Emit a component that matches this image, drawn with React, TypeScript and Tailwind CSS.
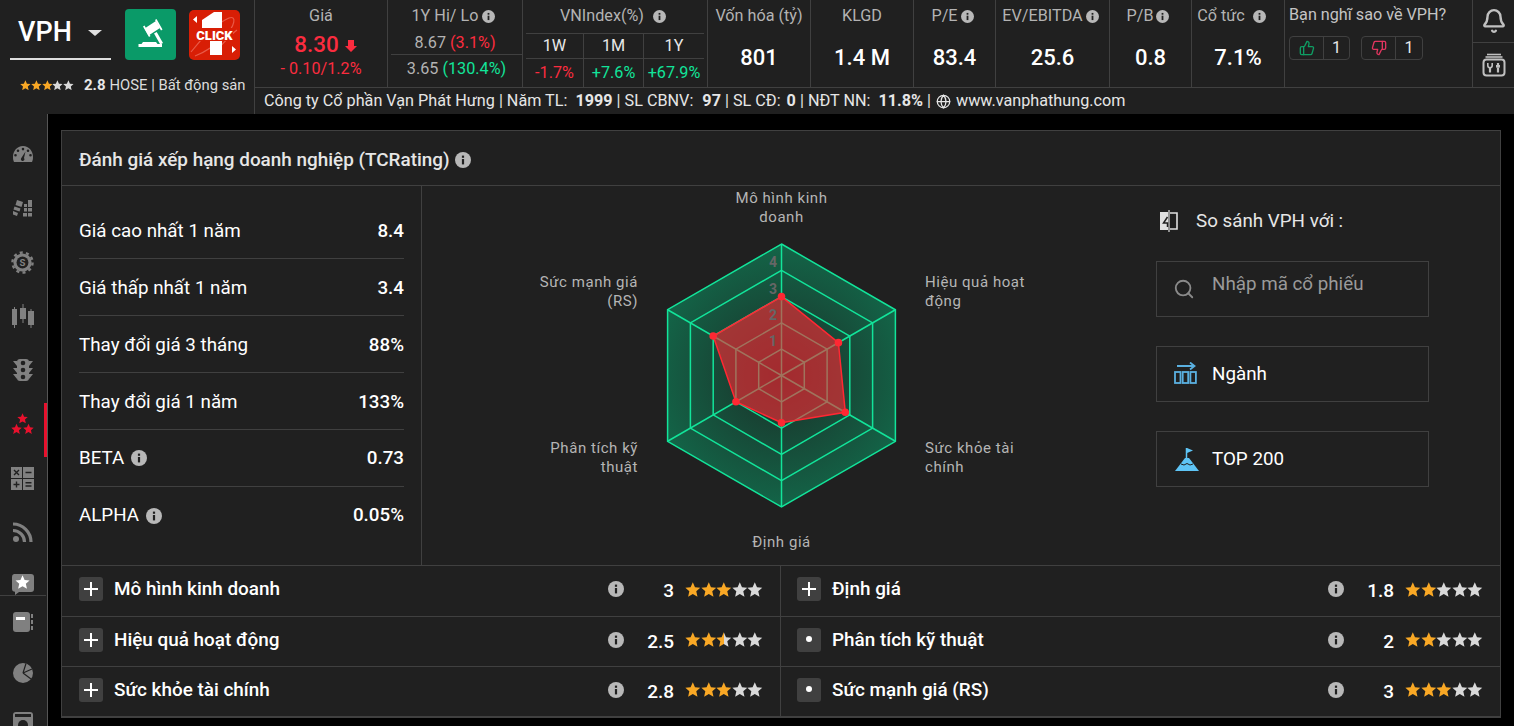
import React from "react";
import { Bell, Globe, Search, ThumbsDown, ThumbsUp } from "lucide-react";

const STAR = "M12 1.5l3.1 7 7.4.7-5.6 5 1.7 7.5L12 17.8l-6.6 3.9 1.7-7.5-5.6-5 7.4-.7z";

function Stars({ value, size }: { value: number; size: number }) {
  const id = React.useId();
  return (
    <span className="inline-flex items-center">
      {[0, 1, 2, 3, 4].map((i) => {
        const fill = Math.min(1, Math.max(0, value - i));
        return (
          <svg key={i} viewBox="1 1 22 22" width={size} height={size} className="block">
            <defs>
              <linearGradient id={id + i}>
                <stop offset={fill} stopColor="#f9a825" />
                <stop offset={fill} stopColor="#d9d9d9" />
              </linearGradient>
            </defs>
            <path d={STAR} fill={`url(#${id + i})`} />
          </svg>
        );
      })}
    </span>
  );
}

function Info({ size = 14, className = "" }: { size?: number; className?: string }) {
  return (
    <svg viewBox="0 0 16 16" width={size} height={size} className={"inline-block shrink-0 " + className}>
      <circle cx="8" cy="8" r="8" fill="#b8b8b8" />
      <rect x="6.9" y="7" width="2.2" height="5.4" fill="#202020" />
      <rect x="6.9" y="3.6" width="2.2" height="2.2" fill="#202020" />
    </svg>
  );
}

function Metric({ w, label, value, info, cls = "" }: { w: string; label: string; value: string; info?: boolean; cls?: string }) {
  return (
    <div className={w + " shrink-0 h-full border-r border-[#404040] flex flex-col items-center"}>
      <div className={"h-[32px] flex items-center text-[16.2px] text-[#b3b3b3] whitespace-nowrap " + cls}>
        {label}
        {info && <Info size={13} className="ml-[3px]" />}
      </div>
      <div className="mt-[12px] h-[28px] flex items-center text-[22px] font-medium text-white leading-none">{value}</div>
    </div>
  );
}

function Logos() {
  return (
    <>
      <div className="w-[51px] h-[51px] rounded-[4px] bg-[#0a9a68] flex items-center justify-center">
        <svg viewBox="0 0 51 51" width="51" height="51">
          <g fill="#fff">
            <path d="M19.500 19.500L31 12l4 7-11.500 7.500z" />
            <path d="M18 17.500l1.500-1 6 10.500-1.500 1zM30 11l1.500-1 6 10.500-1.500 1z" />
            <path d="M29 24.500l2.700-1.600 6.300 11-2.700 1.600z" />
            <path d="M18 33h13l1.500 2H37v3H13.500v-3h3z" />
          </g>
        </svg>
      </div>
      <div className="ml-[13px] mt-[1px] w-[51px] h-[50px] rounded-[5px] bg-[#d81e05] overflow-hidden">
        <svg viewBox="0 0 51 50" width="51" height="50">
          <path d="M2 42C14 26 30 12 40 8c8-3 6 8-4 18-8 8-20 16-30 20" fill="none" stroke="#e85a48" strokeWidth="1.2" />
          <path d="M24 44c8-8 18-20 24-24" fill="none" stroke="#e85a48" strokeWidth="1.2" />
          <path d="M13 10L25 2h8v17H13z" fill="#fff" />
          <rect x="21" y="31" width="12" height="14" fill="#fff" />
          <path d="M8 6L4 9.500 8 13zM43 36l4 3.500-4 3.500z" fill="#fff" />
          <rect x="7" y="18" width="37" height="13" fill="#d81e05" />
          <text x="25.500" y="30" textAnchor="middle" fontSize="13" fontWeight="900" fill="#fff" fontFamily="Roboto, sans-serif">CLICK</text>
        </svg>
      </div>
    </>
  );
}

function Header() {
  return (
    <div className="h-[114px] flex bg-[#202020] shrink-0">
      <div className="w-[255px] shrink-0 border-r border-[#404040] flex flex-col">
        <div className="flex pt-[9px] h-[72px]">
          <div className="ml-[10px] w-[101px] h-[51px] border-b-2 border-[#dddddd] flex items-center pl-[8px]">
            <span className="text-[27px] font-medium text-white leading-none mt-[-3px]">VPH</span>
            <span className="ml-[16px] mt-[-2px] w-0 h-0 border-x-[7px] border-x-transparent border-t-[6px] border-t-[#e0e0e0]" />
          </div>
          <div className="ml-[14px] flex items-start">
            <Logos />
          </div>
        </div>
        <div className="flex items-center h-[26px] pl-[20px]">
          <Stars value={3} size={10.8} />
          <span className="ml-[10px] text-[15px] font-bold text-[#e8e8e8]">2.8</span>
          <span className="ml-[4px] text-[14.8px] text-[#dcdcdc] whitespace-nowrap">HOSE | Bất động sản</span>
        </div>
      </div>
      <div className="flex-1 flex flex-col min-w-0">
        <div className="h-[88px] flex border-b border-[#404040]">
          <div className="w-[133px] shrink-0 border-r border-[#404040] flex flex-col items-center">
            <div className="h-[32px] flex items-center text-[16.2px] text-[#b3b3b3]">Giá</div>
            <div className="h-[25px] flex items-center ml-[9px] text-[22.5px] font-medium text-[#fb2c3f] leading-none">
              8.30
              <svg viewBox="0 0 12 12" width="12" height="12" className="ml-[6px] mt-[2px]"><path d="M3 0h6v6h3L6 12 0 6h3z" fill="#fb2c3f" /></svg>
            </div>
            <div className="h-[24px] flex items-center text-[16.2px] text-[#fb2c3f]">- 0.10/1.2%</div>
          </div>
          <div className="w-[135px] shrink-0 border-r border-[#404040] flex flex-col">
            <div className="h-[32px] flex items-center justify-center pr-[3px] text-[16.2px] text-[#b3b3b3]">1Y Hi/ Lo<Info size={13} className="ml-1" /></div>
            <div className="h-[22px] flex items-center justify-center text-[16.2px] text-[#b3b3b3]">8.67&nbsp;<span className="text-[#fb2c3f]">(3.1%)</span></div>
            <div className="ml-[3px] h-[30px] border-t border-[#404040] flex items-center justify-center text-[16.2px] text-[#b3b3b3]">3.65&nbsp;<span className="text-[#12e49a]">(130.4%)</span></div>
          </div>
          <div className="w-[185px] shrink-0 border-r border-[#404040] flex flex-col">
            <div className="h-[33px] flex items-center justify-center pr-[4px] text-[16.2px] text-[#b3b3b3]">VNIndex(%)<Info size={13} className="ml-[9px]" /></div>
            <div className="ml-[3px] mr-[3px] border-t border-[#404040] grid grid-cols-[58px_60px_60px] flex-1 grid-rows-[25px_1fr]">
              <div className="border-r border-b border-[#404040] flex items-center justify-center text-[16.2px] text-[#e8e8e8]">1W</div>
              <div className="border-r border-b border-[#404040] flex items-center justify-center text-[16.2px] text-[#e8e8e8]">1M</div>
              <div className="border-b border-[#404040] flex items-center justify-center text-[16.2px] text-[#e8e8e8]">1Y</div>
              <div className="border-r border-[#404040] flex items-center justify-center text-[16.2px] text-[#fb2c3f]">-1.7%</div>
              <div className="border-r border-[#404040] flex items-center justify-center text-[16.2px] text-[#12e49a]">+7.6%</div>
              <div className="flex items-center justify-center text-[16.2px] text-[#12e49a]">+67.9%</div>
            </div>
          </div>
          <Metric w="w-[103px]" label="Vốn hóa (tỷ)" value="801" />
          <Metric w="w-[103px]" label="KLGD" value="1.4 M" />
          <Metric w="w-[82px]" label="P/E" value="83.4" info cls="pr-[4px]" />
          <Metric w="w-[114px]" label="EV/EBITDA" value="25.6" info cls="pr-[4px]" />
          <Metric w="w-[82px]" label="P/B" value="0.8" info cls="pr-[5px]" />
          <div className="w-[93px] shrink-0 h-full border-r border-[#404040] flex flex-col items-center">
            <div className="h-[32px] flex items-center text-[16.2px] text-[#b3b3b3] whitespace-nowrap pr-[13px] pl-[0px]">
              Cổ tức
              <Info size={13} className="ml-[8px]" />
            </div>
            <div className="mt-[12px] h-[28px] flex items-center text-[22px] font-medium text-white leading-none">7.1%</div>
          </div>
          <div className="w-[188px] shrink-0 border-r border-[#404040] pl-[4px]">
            <div className="h-[31px] flex items-center text-[16.2px] text-[#c4c4c4] whitespace-nowrap">Bạn nghĩ sao về VPH?</div>
            <div className="mt-[5px] flex gap-[11px]">
              <div className="flex h-[24px] w-[61px] rounded-[4px] border border-[#404040]">
                <div className="w-[34px] border-r border-[#404040] flex items-center justify-center"><ThumbsUp size={16} color="#0f9d63" /></div>
                <div className="flex-1 flex items-center justify-center text-[16.2px] text-[#e8e8e8]">1</div>
              </div>
              <div className="flex h-[24px] w-[62px] rounded-[4px] border border-[#404040]">
                <div className="w-[34px] border-r border-[#404040] flex items-center justify-center"><ThumbsDown size={16} color="#e0355f" /></div>
                <div className="flex-1 flex items-center justify-center text-[16.2px] text-[#e8e8e8]">1</div>
              </div>
            </div>
          </div>
          <div className="flex-1 flex flex-col">
            <div className="h-[43px] border-b border-[#404040] flex items-center justify-center"><Bell size={26} color="#c0c0c0" strokeWidth={2.2} /></div>
            <div className="flex-1 flex items-center justify-center">
              <svg viewBox="0 0 24 24" width="24" height="24">
                <path d="M5 1.500h14" stroke="#c0c0c0" strokeWidth="1.600" fill="none" />
                <path d="M3.500 4h17" stroke="#c0c0c0" strokeWidth="1.600" fill="none" />
                <rect x="1.500" y="6.500" width="21" height="16" rx="3" fill="none" stroke="#c0c0c0" strokeWidth="2" />
                <path d="M8 14v5.500M16 14.500v5M16 10v2.500" stroke="#c0c0c0" strokeWidth="2.200" fill="none" />
                <path d="M5.800 10v2.500a2.200 2.200 0 004.400 0V10" stroke="#c0c0c0" strokeWidth="1.600" fill="none" />
                <rect x="14" y="12" width="4" height="2.600" fill="#c0c0c0" />
              </svg>
            </div>
          </div>
        </div>
        <div className="flex-1 flex items-center pl-[9px] text-[16.2px] text-[#e6e6e6] whitespace-pre">
          <span>Công ty Cổ phần Vạn Phát Hưng | Năm TL:  <b className="font-bold">1999</b> | SL CBNV:  <b className="font-bold ml-[1px]">97</b> | SL CĐ: <b className="font-bold ml-[2px]">0</b> | NĐT NN:  <b className="font-bold">11.8%</b> | </span>
          <Globe size={15} color="#e6e6e6" className="mr-[5px] ml-[1px]" />
          <span>www.vanphathung.com</span>
        </div>
      </div>
    </div>
  );
}

const G = "#808080";
const sideIcons: React.ReactNode[] = [
  <svg viewBox="0 0 20 16" width="20" height="16"><path fillRule="evenodd" d="M10 0C4 0 0 5 0 11c0 2 .3 3.500 1 5h18c.7-1.500 1-3 1-5C20 5 16 0 10 0zM5 3.500a1.300 1.300 0 110 2.600 1.300 1.300 0 010-2.600zM2.500 8a1.300 1.300 0 110 2.600A1.300 1.300 0 012.500 8zM10 1.800a1.300 1.300 0 110 2.600 1.300 1.300 0 010-2.600zM15 3.500a1.300 1.300 0 110 2.600 1.300 1.300 0 010-2.600zM17.500 8a1.300 1.300 0 110 2.600 1.300 1.300 0 010-2.600zM12.500 5.500L11 12a1.800 1.800 0 11-3 .5z" fill={G} /></svg>,
  <svg viewBox="0 0 20 18" width="20" height="18" fill={G}><path d="M4 1l6 2-1.500 5-6-2zM1.500 7.500l6 2-1 3-6-2zM0 12l5 2-1 3-5-2zM11 5h3v3h-3zM15 1h4v7h-4zM11 9h3v3.500h-3zM15 9h4v3.500h-4zM10 14h4v3.500h-4zM15 14h4v3.500h-4z" /></svg>,
  <svg viewBox="0 0 24 24" width="23" height="23"><circle cx="12" cy="12" r="9.500" fill={G} /><circle cx="12" cy="12" r="10.500" fill="none" stroke={G} strokeWidth="2.500" strokeDasharray="3.200 3.400" /><circle cx="12" cy="12" r="6.200" fill="#202020" /><text x="12" y="15.800" textAnchor="middle" fontSize="10" fontWeight="700" fill={G} fontFamily="Roboto, sans-serif">S</text></svg>,
  <svg viewBox="0 0 22 24" width="22" height="24" fill={G}><rect x="0" y="5" width="5" height="16" /><rect x="2" y="3" width="1" height="21" /><rect x="8" y="4" width="6" height="11" /><rect x="10.500" y="0" width="1" height="19" /><rect x="16" y="7" width="6" height="14" /><rect x="18.500" y="5" width="1" height="19" /></svg>,
  <svg viewBox="0 0 20 22" width="20" height="22" fill={G}><rect x="4" y="0" width="12" height="22" rx="3" /><path d="M0 2h4v5zM20 2h-4v5zM0 9h4v5zM20 9h-4v5zM0 15h4v5zM20 15h-4v5z" /><circle cx="10" cy="4" r="2.300" fill="#202020" /><circle cx="10" cy="11" r="2.300" fill="#202020" /><circle cx="10" cy="18" r="2.300" fill="#202020" /></svg>,
  <svg viewBox="0 0 24 24" width="23" height="23" fill="#e8112d"><g transform="translate(5.800 -0.500) scale(.52)"><path d={STAR} /></g><g transform="translate(-0.500 10.500) scale(.52)"><path d={STAR} /></g><g transform="translate(12 10.500) scale(.52)"><path d={STAR} /></g></svg>,
  <svg viewBox="0 0 23 23" width="23" height="23"><g fill={G}><rect width="11" height="11" /><rect x="12" width="11" height="11" /><rect y="12" width="11" height="11" /><rect x="12" y="12" width="11" height="11" /></g><g stroke="#202020" strokeWidth="1.400" fill="none"><path d="M3 3l5 5M8 3l-5 5M14.500 5.500h6M14.500 15.800h6M14.500 19h6M5.500 14.500v6M2.500 17.500h6" /></g></svg>,
  <svg viewBox="0 0 20 20" width="20" height="20" fill="none" stroke={G} strokeWidth="3.200"><circle cx="3" cy="17" r="3" fill={G} stroke="none" /><path d="M0 8.500A11.500 11.500 0 0111.500 20" /><path d="M0 2a18 18 0 0118 18" /></svg>,
  <svg viewBox="0 0 23 21" width="23" height="21" className="mt-[-4px]"><path d="M3 0h17a3 3 0 013 3v12a3 3 0 01-3 3H8l-4 3v-3.200A3 3 0 011 15V3a3 3 0 012-3z" fill={G} /><g transform="translate(3.500 0.300) scale(.67)"><path d={STAR} fill="#fff" /></g></svg>,
];

function Sidebar() {
  return (
    <div className="w-[48px] shrink-0 h-full bg-[#202020] border-r border-[#555555] flex flex-col relative">
      <div className="h-[481px] overflow-hidden pt-[13px] shrink-0 pr-[2px]">
        {sideIcons.map((ic, i) => (
          <div key={i} className="h-[54px] flex items-center justify-center">{ic}</div>
        ))}
      </div>
      <div className="absolute right-0 top-[289px] w-[3px] h-[54px] bg-[#e8112d]" />
      <div className="border-t border-[#404040] mr-[1px] flex-1 overflow-hidden pt-[1px] pr-[1px]">
        <div className="h-[50px] flex items-center justify-center">
          <svg viewBox="0 0 20 20" width="20" height="20" fill={G}><rect width="17" height="20" rx="3" /><rect x="18" y="2" width="2" height="4" /><rect x="18" y="8" width="2" height="4" /><rect x="18" y="14" width="2" height="4" /><rect x="3" y="5" width="9" height="3" fill="#fff" /></svg>
        </div>
        <div className="h-[51px] flex items-center justify-center">
          <svg viewBox="0 0 20 20" width="20" height="20"><circle cx="10" cy="10" r="10" fill={G} /><path d="M10 10l3-9.500M10 10l9-4M10 10l8 6" stroke="#202020" strokeWidth="1.200" fill="none" /></svg>
        </div>
        <div className="h-[51px] flex items-center justify-center">
          <svg viewBox="0 0 20 24" width="20" height="24"><rect width="20" height="24" rx="3" fill={G} /><rect x="2" y="2" width="16" height="3" fill="#202020" /><circle cx="10" cy="13" r="5" fill="#202020" /></svg>
        </div>
      </div>
    </div>
  );
}

const CX = 359.5;
const CY = 189.5;
const R = 26.3;
const angles = [-90, -30, 30, 90, 150, 210].map((a) => (a * Math.PI) / 180);
const pt = (r: number, i: number) => [CX + r * Math.cos(angles[i]), CY + r * Math.sin(angles[i])];
const poly = (vals: number[]) => vals.map((v, i) => pt(v * R, i).map((n) => n.toFixed(1)).join(",")).join(" ");
const data = [3, 2.5, 2.8, 1.8, 2, 3];

function Radar() {
  return (
    <svg width="734" height="379" className="block" fontFamily="Roboto, sans-serif">
      <defs>
        <radialGradient id="rg" gradientUnits="userSpaceOnUse" cx={CX} cy={CY} r="132">
          <stop offset="0" stopColor="#1b2f28" />
          <stop offset="1" stopColor="#136548" />
        </radialGradient>
      </defs>
      <polygon points={poly([5, 5, 5, 5, 5, 5])} fill="url(#rg)" />
      {[1, 2, 3, 4, 5].map((l) => (
        <polygon key={l} points={poly([l, l, l, l, l, l])} fill="none" stroke="#12e49a" strokeWidth="1.500" />
      ))}
      {angles.map((_, i) => {
        const p = pt(5 * R, i);
        return <line key={i} x1={CX} y1={CY} x2={p[0]} y2={p[1]} stroke="#12e49a" strokeWidth="1.500" />;
      })}
      <polygon points={poly(data)} fill="#ff2833" fillOpacity="0.6" stroke="#ff2833" strokeWidth="1.500" />
      {data.map((v, i) => {
        const p = pt(v * R, i);
        return <circle key={i} cx={p[0]} cy={p[1]} r="3.800" fill="#ff2833" />;
      })}
      {[1, 2, 3, 4].map((n) => (
        <text key={n} x={CX - 4.5} y={CY - n * R - 3} textAnchor="end" fontSize="14" fontWeight="700" fill="#666666">{n}</text>
      ))}
      <g fill="#b5b5b5" className="text-[15px] tracking-[0.55px]">
        <text x={CX} y="17" textAnchor="middle">Mô hình kinh</text>
        <text x={CX} y="36" textAnchor="middle">doanh</text>
        <text x="503" y="101">Hiệu quả hoạt</text>
        <text x="503" y="120">động</text>
        <text x="503" y="267">Sức khỏe tài</text>
        <text x="503" y="286">chính</text>
        <text x={CX} y="361" textAnchor="middle">Định giá</text>
        <text x="216" y="267" textAnchor="end">Phân tích kỹ</text>
        <text x="216" y="286" textAnchor="end">thuật</text>
        <text x="216" y="101" textAnchor="end">Sức mạnh giá</text>
        <text x="216" y="120" textAnchor="end">(RS)</text>
      </g>
    </svg>
  );
}

const stats: [string, string, boolean][] = [
  ["Giá cao nhất 1 năm", "8.4", false],
  ["Giá thấp nhất 1 năm", "3.4", false],
  ["Thay đổi giá 3 tháng", "88%", false],
  ["Thay đổi giá 1 năm", "133%", false],
  ["BETA", "0.73", true],
  ["ALPHA", "0.05%", true],
];

function Cell({ label, value, rating, dot, right, first }: { label: string; value: string; rating: number; dot?: boolean; right?: boolean; first?: boolean }) {
  return (
    <div className={"flex items-center pr-[17px] border-b border-[#404040] " + (right ? "pl-[16px]" : "pl-[17px] border-r")}>
      <div className="w-[24px] h-[24px] rounded-[3px] bg-[#404040] flex items-center justify-center mt-[-4px]">
        {dot ? (
          <span className="w-[6px] h-[6px] rounded-full bg-white mt-[-2px]" />
        ) : (
          <svg viewBox="0 0 14 14" width="14" height="14"><path d="M7 0v14M0 7h14" stroke="#fff" strokeWidth="2" /></svg>
        )}
      </div>
      <div className={"ml-[11px] flex-1 text-[18.9px] font-medium text-white " + (first ? "mt-[-4px]" : "mt-[-3px]")}>{label}</div>
      <Info size={16} className="mt-[-4px]" />
      <div className="w-[50px] text-right text-[19px] font-medium text-white mt-[1px]">{value}</div>
      <div className="ml-[11px] mt-[3px]">
        <Stars value={rating} size={15.6} />
      </div>
    </div>
  );
}

export default function App() {
  return (
    <div className="w-[1514px] h-[726px] overflow-hidden bg-black flex flex-col font-['Roboto',sans-serif]">
      <Header />
      <div className="flex-1 flex min-h-0">
        <Sidebar />
        <div className="flex-1 pl-[13px] pt-[16px] pr-[13px]">
          <div className="h-[588px] border border-[#404040] bg-[#202020] flex flex-col">
            <div className="h-[55px] shrink-0 border-b border-[#404040] flex items-center pl-[17px] pt-[4px] text-[18.9px] font-medium text-[#e6e6e6]">
              Đánh giá xếp hạng doanh nghiệp (TCRating)
              <Info size={16} className="ml-[5px]" />
            </div>
            <div className="h-[380px] shrink-0 flex border-b border-[#404040]">
              <div className="w-[360px] shrink-0 border-r border-[#404040] pl-[17px] pr-[17px] pt-[16px]">
                {stats.map(([l, v, inf], i) => (
                  <div key={l} className={"h-[57px] flex items-center justify-between text-[18.8px] text-white " + (i < 4 ? "border-b border-[#404040] pt-[2px]" : i === 4 ? "border-b border-[#404040]" : "")}>
                    <span className="flex items-center">{l}{inf && <Info size={16} className="ml-[7px]" />}</span>
                    <span className="font-medium">{v}</span>
                  </div>
                ))}
              </div>
              <div className="w-[734px] shrink-0">
                <Radar />
              </div>
              <div className="w-[273px] shrink-0">
                <div className="h-[70px] mb-[5px] flex items-center text-[18.8px] text-[#e6e6e6]">
                  <svg viewBox="0 0 20 22" width="20" height="22" className="ml-[3px] mr-[17px]">
                    <path d="M9 2H1v18h8z" fill="#e0e0e0" />
                    <path d="M11 3h7v16h-7" fill="none" stroke="#e0e0e0" strokeWidth="1.600" />
                    <path d="M10 0v22" stroke="#e0e0e0" strokeWidth="1.200" />
                    <path d="M8.500 7l-4 6h4v4" fill="none" stroke="#202020" strokeWidth="1.500" />
                  </svg>
                  So sánh VPH với :
                </div>
                <div className="h-[56px] border border-[#404040] flex pl-[16px] text-[18.8px] text-[#9a9a9a]">
                  <Search size={22} color="#8a8a8a" className="mt-[16px]" />
                  <span className="ml-[17px] mt-[8px]">Nhập mã cổ phiếu</span>
                </div>
                <div className="mt-[29px] h-[56px] border border-[#404040] flex items-center pl-[17px] text-[18.8px] text-white">
                  <svg viewBox="0 0 23 23" width="23" height="23" className="mr-[15px] mt-[-1px]">
                    <path d="M3 4h17M16 .5L20.500 4 16 7.500" fill="none" stroke="#5ab0e0" strokeWidth="1.800" />
                    <g fill="none" stroke="#5ab0e0" strokeWidth="1.800"><rect x="1" y="10" width="5.500" height="11" /><rect x="8.700" y="10" width="5.500" height="11" /><rect x="16.400" y="10" width="5.500" height="11" /></g>
                  </svg>
                  <span>Ngành</span>
                </div>
                <div className="mt-[29px] h-[56px] border border-[#404040] flex items-center pl-[18px] text-[18.8px] text-white">
                  <svg viewBox="0 0 24 24" width="24" height="24" className="mr-[13px]">
                    <path d="M11.500 1v12" stroke="#5ec4f5" strokeWidth="1.500" />
                    <path d="M12 1l6 2.500-6 2.500z" fill="#5ec4f5" />
                    <path d="M10 11h4l10 13H0z" fill="#5ec4f5" />
                    <path d="M6 17l3 1 3-1.500 3 1.500 3-1" fill="none" stroke="#202020" strokeWidth="1" />
                  </svg>
                  <span>TOP 200</span>
                </div>
              </div>
            </div>
            <div className="grid grid-cols-[719px_1fr] grid-rows-[51px_50px_50px] flex-1">
              <Cell label="Mô hình kinh doanh" value="3" rating={3} first />
              <Cell label="Định giá" value="1.8" rating={2} right first />
              <Cell label="Hiệu quả hoạt động" value="2.5" rating={2.5} />
              <Cell label="Phân tích kỹ thuật" value="2" rating={2} dot right />
              <Cell label="Sức khỏe tài chính" value="2.8" rating={3} />
              <Cell label="Sức mạnh giá (RS)" value="3" rating={3} dot right />
            </div>
          </div>
        </div>
      </div>
    </div>
  );
}
